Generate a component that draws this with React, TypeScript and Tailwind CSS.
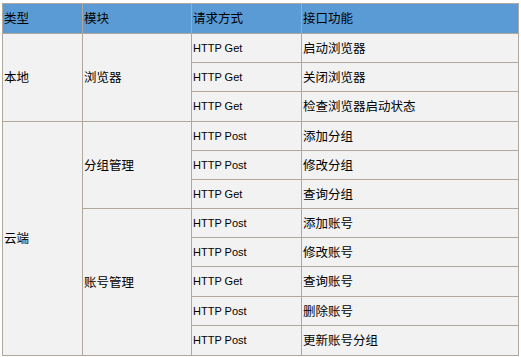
import React from "react";

const CJK = "font-['Noto_Sans_CJK_SC',sans-serif] text-[12.5px] text-black";
const HTTP = "font-['Liberation_Sans',sans-serif] text-[11px] text-black";

const apis: { method: string; fn: string }[] = [
  { method: "HTTP Get", fn: "启动浏览器" },
  { method: "HTTP Get", fn: "关闭浏览器" },
  { method: "HTTP Get", fn: "检查浏览器启动状态" },
  { method: "HTTP Post", fn: "添加分组" },
  { method: "HTTP Post", fn: "修改分组" },
  { method: "HTTP Get", fn: "查询分组" },
  { method: "HTTP Post", fn: "添加账号" },
  { method: "HTTP Post", fn: "修改账号" },
  { method: "HTTP Get", fn: "查询账号" },
  { method: "HTTP Post", fn: "删除账号" },
  { method: "HTTP Post", fn: "更新账号分组" },
];

const ROW_START = [
  "row-start-2",
  "row-start-3",
  "row-start-4",
  "row-start-5",
  "row-start-6",
  "row-start-7",
  "row-start-8",
  "row-start-9",
  "row-start-10",
  "row-start-11",
  "row-start-12",
];

export default function App() {
  return (
    <div className="w-[521px] h-[357px] bg-white pt-[3px] pl-[2px]">
      <div className="grid w-[517px] grid-cols-[79px_108px_109px_216px] grid-rows-[29px_28px_28px_29px_28px_28px_28px_28px_28px_29px_28px_29px] gap-px p-px bg-[#b0a89c]">
        {/* Header */}
        {["类型", "模块", "请求方式", "接口功能"].map((h) => (
          <div key={h} className={`bg-[#5b9bd5] flex items-center pl-px ${CJK}`}>
            {h}
          </div>
        ))}

        {/* Type column */}
        <div className={`col-start-1 row-start-2 row-span-3 bg-[#f2f2f2] flex items-center pl-px ${CJK}`}>
          本地
        </div>
        <div className={`col-start-1 row-start-5 row-span-8 bg-[#f2f2f2] flex items-center pl-px ${CJK}`}>
          云端
        </div>

        {/* Module column */}
        <div className={`col-start-2 row-start-2 row-span-3 bg-[#f2f2f2] flex items-center pl-px ${CJK}`}>
          浏览器
        </div>
        <div className={`col-start-2 row-start-5 row-span-3 bg-[#f2f2f2] flex items-center pl-px ${CJK}`}>
          分组管理
        </div>
        <div className={`col-start-2 row-start-8 row-span-5 bg-[#f2f2f2] flex items-center pl-px ${CJK}`}>
          账号管理
        </div>

        {/* Method + function */}
        {apis.map((a, i) => (
          <React.Fragment key={i}>
            <div className={`col-start-3 ${ROW_START[i]} bg-[#f2f2f2] flex items-center pl-px ${HTTP}`}>
              {a.method}
            </div>
            <div className={`col-start-4 ${ROW_START[i]} bg-[#f2f2f2] flex items-center pl-px ${CJK}`}>
              {a.fn}
            </div>
          </React.Fragment>
        ))}
      </div>
    </div>
  );
}
